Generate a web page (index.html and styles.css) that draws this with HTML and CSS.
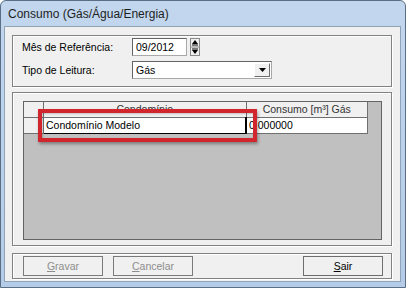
FILE: index.html
```html
<!DOCTYPE html>
<html lang="pt">
<head>
    <meta charset="UTF-8">
    <title>Consumo (Gás/Água/Energia)</title>
    <link rel="stylesheet" href="styles.css">
</head>
<body>
    <div class="window">
        <div class="titlebar">Consumo (Gás/Água/Energia)</div>

        <div class="client">
            <!-- filtros -->
            <div class="group filters">
                <label>Mês de Referência:</label>
                <div class="field">
                    <div class="edit month">09/2012</div>
                    <div class="spin">
                        <svg width="10" height="18" viewBox="0 0 10 18">
                            <rect x="0.5" y="0.5" width="9" height="17" fill="#f0f0f0" stroke="#8a8a8a"/>
                            <line x1="0" y1="9" x2="10" y2="9" stroke="#8a8a8a"/>
                            <path d="M5 2 L8 6 L2 6 Z" fill="#000"/>
                            <rect x="2" y="6.5" width="6" height="1" fill="#000"/>
                            <rect x="2" y="10.5" width="6" height="1" fill="#000"/>
                            <path d="M2 12 L8 12 L5 16 Z" fill="#000"/>
                        </svg>
                    </div>
                </div>
                <label>Tipo de Leitura:</label>
                <div class="field">
                    <div class="edit combo">
                        <span>Gás</span>
                        <span class="drop">
                            <svg width="7" height="4" viewBox="0 0 7 4"><path d="M0 0 L7 0 L3.5 4 Z" fill="#000"/></svg>
                        </span>
                    </div>
                </div>
            </div>

            <!-- grade -->
            <div class="group gridbox">
                <div class="grid">
                    <table>
                        <tr class="head">
                            <td class="ind"></td>
                            <td class="c1">Condomínio</td>
                            <td class="c2">Consumo [m³] Gás</td>
                        </tr>
                        <tr class="row">
                            <td class="ind"></td>
                            <td class="c1 focus">Condomínio Modelo</td>
                            <td class="c2">0,000000</td>
                        </tr>
                    </table>
                    <div class="mark"></div>
                </div>
            </div>

            <!-- botões -->
            <div class="group buttons">
                <button class="btn" disabled><u>G</u>ravar</button>
                <button class="btn" disabled><u>C</u>ancelar</button>
                <span class="spacer"></span>
                <button class="btn"><u>S</u>air</button>
            </div>
        </div>
    </div>
</body>
</html>
```

FILE: styles.css
```css
html, body {
    margin: 0;
    padding: 0;
}
body {
    width: 406px;
    height: 288px;
    overflow: hidden;
    font-family: "Liberation Sans", Arial, sans-serif;
    font-size: 10px;
    color: #000;
}
.window {
    width: 406px;
    height: 288px;
    box-sizing: border-box;
    background: linear-gradient(to bottom, #c2d7ee, #b4cce7);
    border: 1px solid #5a6f86;
    border-radius: 6px 6px 0 0;
    display: flex;
    flex-direction: column;
}
.titlebar {
    height: 25px;
    padding-left: 7px;
    line-height: 27px;
    font-family: "Liberation Sans", Arial, sans-serif;
    font-size: 12px;
    color: #1e1e1e;
}
.client {
    margin: 0 4px 5px 3px;
    flex: 1;
    background: #f0f0f0;
    border: 1px solid #8fa3b9;
    padding: 8px 8px 0 7px;
    display: flex;
    flex-direction: column;
}
.group {
    border: 1px solid #828282;
    box-shadow: inset 1px 1px 0 #fff, 1px 1px 0 #fff;
}

/* filtros */
.filters {
    height: 48px;
    display: grid;
    grid-template-columns: 110px auto;
    align-items: center;
    row-gap: 5px;
    padding: 2px 9px 0 9px;
    align-content: start;
}
.filters label {
    line-height: 18px;
    font-size: 10.5px;
}
.field {
    display: flex;
    align-items: flex-start;
    gap: 3px;
}
.edit {
    height: 18px;
    box-sizing: border-box;
    background: #fff;
    border: 1px solid #a8a8a8;
    border-top-color: #646464;
    border-left-color: #646464;
    padding-left: 3px;
    line-height: 16px;
    font-size: 10.5px;
}
.month {
    width: 55px;
}
.spin {
    height: 18px;
}
.combo {
    width: 140px;
    display: flex;
    justify-content: space-between;
    padding-right: 1px;
}
.drop {
    width: 16px;
    height: 14px;
    margin-top: 1px;
    box-sizing: border-box;
    background: #f0f0f0;
    border: 1px solid #fff;
    border-right-color: #6e6e6e;
    border-bottom-color: #6e6e6e;
    display: flex;
    align-items: center;
    justify-content: center;
}

/* grade */
.gridbox {
    margin-top: 5px;
    height: 154px;
    box-sizing: border-box;
    padding: 8px 9px 5px 10px;
}
.grid {
    position: relative;
    height: 100%;
    box-sizing: border-box;
    background: #c0c0c0;
    border: 1px solid #646464;
}
.grid table {
    border-collapse: collapse;
}
.grid td {
    height: 15px;
    padding: 0 2px;
    border-right: 1px solid #707070;
    border-bottom: 1px solid #707070;
    white-space: nowrap;
    line-height: 15px;
    font-size: 10.5px;
}
.head td {
    background: #f0f0f0;
    text-align: center;
    color: #333;
}
.row td {
    background: #fff;
}
.row td.ind {
    background: #f0f0f0;
}
.ind {
    width: 15px;
}
.c1 {
    width: 197px;
}
.c2 {
    width: 116px;
}
.row .focus {
    border: 1px solid #000;
    border-right-width: 2px;
}
.mark {
    position: absolute;
    left: 14px;
    top: 7px;
    width: 211px;
    height: 25px;
    border: 4px solid #d2262e;
    box-shadow: 1px 2px 3px rgba(0, 0, 0, 0.35), inset 1px 1px 2px rgba(0, 0, 0, 0.2);
}

/* botões */
.buttons {
    margin-top: 7px;
    height: 26px;
    box-sizing: border-box;
    padding: 2px 8px 0 10px;
    display: flex;
    gap: 10px;
}
.spacer {
    flex: 1;
}
.btn {
    width: 80px;
    height: 20px;
    padding: 0;
    font-family: "Liberation Sans", Arial, sans-serif;
    font-size: 10.5px;
    color: #000;
    background: #f0f0f0;
    border: 1px solid #6e6e6e;
    border-radius: 0;
}
.btn:disabled {
    color: #8d8d8d;
    border-color: #7a7a7a;
}
```
